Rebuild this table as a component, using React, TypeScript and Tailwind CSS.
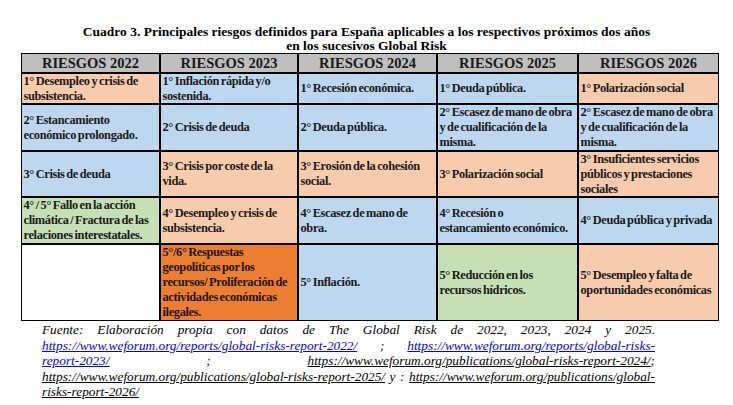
const SERIF = "[font-family:'Liberation_Serif','Times_New_Roman',serif]";
const PEACH = "bg-[#f8cbad]";
const BLUE = "bg-[#bdd7ee]";
const GREEN = "bg-[#c5e0b4]";
const ORANGE = "bg-[#ed7d31]";
const WHITE = "bg-white";

type Cell = { bg: string; lines: string[] };

const years = ["2022", "2023", "2024", "2025", "2026"];

const rows: { h: string; cells: Cell[] }[] = [
  {
    h: "h-[29px]",
    cells: [
      { bg: PEACH, lines: ["1° Desempleo y crisis de", "subsistencia."] },
      { bg: BLUE, lines: ["1° Inflación rápida y/o", "sostenida."] },
      { bg: BLUE, lines: ["1° Recesión económica."] },
      { bg: BLUE, lines: ["1° Deuda pública."] },
      { bg: PEACH, lines: ["1° Polarización social"] },
    ],
  },
  {
    h: "h-[45px]",
    cells: [
      { bg: BLUE, lines: ["2° Estancamiento", "económico prolongado."] },
      { bg: BLUE, lines: ["2° Crisis de deuda"] },
      { bg: BLUE, lines: ["2° Deuda pública."] },
      { bg: BLUE, lines: ["2° Escasez de mano de obra", "y de cualificación de la", "misma."] },
      { bg: BLUE, lines: ["2° Escasez de mano de obra", "y de cualificación de la", "misma."] },
    ],
  },
  {
    h: "h-[44px]",
    cells: [
      { bg: BLUE, lines: ["3° Crisis de deuda"] },
      { bg: PEACH, lines: ["3° Crisis por coste de la", "vida."] },
      { bg: PEACH, lines: ["3° Erosión de la cohesión", "social."] },
      { bg: PEACH, lines: ["3° Polarización social"] },
      { bg: PEACH, lines: ["3° Insuficientes servicios", "públicos y prestaciones", "sociales"] },
    ],
  },
  {
    h: "h-[45px]",
    cells: [
      { bg: GREEN, lines: ["4° / 5° Fallo en la acción", "climática / Fractura de las", "relaciones interestatales."] },
      { bg: PEACH, lines: ["4° Desempleo y crisis de", "subsistencia."] },
      { bg: BLUE, lines: ["4° Escasez de mano de", "obra."] },
      { bg: BLUE, lines: ["4° Recesión o", "estancamiento económico."] },
      { bg: BLUE, lines: ["4° Deuda pública y privada"] },
    ],
  },
  {
    h: "h-[75px]",
    cells: [
      { bg: WHITE, lines: [] },
      {
        bg: ORANGE,
        lines: ["5°/6° Respuestas", "geopolíticas por los", "recursos/ Proliferación de", "actividades económicas", "ilegales."],
      },
      { bg: BLUE, lines: ["5° Inflación."] },
      { bg: GREEN, lines: ["5° Reducción en los", "recursos hídricos."] },
      { bg: PEACH, lines: ["5° Desempleo y falta de", "oportunidades económicas"] },
    ],
  },
];

function Link({ href, blue }: { href: string; blue?: boolean }) {
  return (
    <span className={blue ? "underline text-[#0000ff]" : "underline text-black"}>{href}</span>
  );
}

export default function App() {
  return (
    <div className={`w-[733px] h-[405px] bg-white overflow-hidden ${SERIF} text-black`}>
      <div className="pt-[25px] text-center font-bold text-[13.5px] leading-[14px]">
        <div>Cuadro 3. Principales riesgos definidos para España aplicables a los respectivos próximos dos años</div>
        <div>en los sucesivos Global Risk</div>
      </div>

      {/* table: black background + gaps draw the grid lines */}
      <div className="ml-[21px] w-[698px] bg-black p-px grid grid-cols-[137px_136px_137px_139px_139px] gap-[2px]">
        {years.map((y) => (
          <div
            key={y}
            className="h-[18px] bg-[#bfbfbf] flex items-center justify-center font-bold text-[14.5px] leading-none text-[#1a1a1a]"
          >
            RIESGOS {y}
          </div>
        ))}
        {rows.map((r, i) =>
          r.cells.map((c, j) => (
            <div
              key={`${i}-${j}`}
              className={`${r.h} ${c.bg} flex flex-col justify-center pl-[1.5px] overflow-hidden font-bold text-[12.4px] leading-[15px] tracking-[-0.35px] [word-spacing:-1px] text-[#1a1a1a] whitespace-nowrap`}
            >
              {c.lines.map((l) => (
                <div key={l}>{l}</div>
              ))}
            </div>
          ))
        )}
      </div>

      <div className="ml-[42px] mt-[1px] w-[613px] italic text-[13.3px] leading-[15.5px] text-black">
        <div className="text-justify [text-align-last:justify]">
          Fuente: Elaboración propia con datos de The Global Risk de 2022, 2023, 2024 y 2025.
        </div>
        <div className="text-justify [text-align-last:justify]">
          <Link blue href="https://www.weforum.org/reports/global-risks-report-2022/" /> ;{" "}
          <Link blue href="https://www.weforum.org/reports/global-risks-" />
        </div>
        <div className="text-justify [text-align-last:justify]">
          <Link blue href="report-2023/" /> ; <Link href="https://www.weforum.org/publications/global-risks-report-2024/" />;
        </div>
        <div className="text-justify [text-align-last:justify]">
          <Link href="https://www.weforum.org/publications/global-risks-report-2025/" /> y :{" "}
          <Link href="https://www.weforum.org/publications/global-" />
        </div>
        <div>
          <Link href="risks-report-2026/" />
        </div>
      </div>
    </div>
  );
}
